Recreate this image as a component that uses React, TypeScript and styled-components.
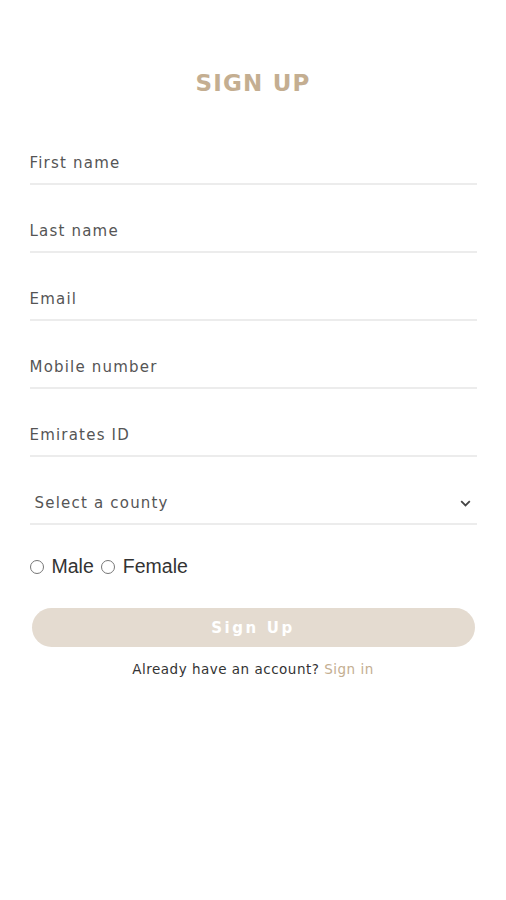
import React, { useState } from 'react';
import styled, { createGlobalStyle } from 'styled-components';

const GlobalStyle = createGlobalStyle`
  body {
    margin: 0;
    background: #ffffff;
    font-family: 'DejaVu Sans', 'Open Sans', sans-serif;
  }
`;

const Page = styled.div`
  width: 447px;
  margin: 0 auto;
  padding-top: 68px;
  display: flex;
  flex-direction: column;
`;

const Title = styled.h1`
  margin: 0 0 44px;
  text-align: center;
  font-size: 23px;
  line-height: 31px;
  font-weight: 700;
  letter-spacing: 1.2px;
  color: #c4ae91;
`;

const Form = styled.form`
  display: flex;
  flex-direction: column;
  gap: 26px;
`;

const Input = styled.input`
  height: 40px;
  padding: 0;
  border: none;
  border-bottom: 2px solid #ececec;
  outline: none;
  background: transparent;
  font-family: 'DejaVu Sans', sans-serif;
  font-size: 15px;
  letter-spacing: 1.2px;
  color: #333;

  &::placeholder {
    color: #555;
  }
`;

const SelectWrap = styled.div`
  position: relative;
  height: 40px;
  border-bottom: 2px solid #ececec;
`;

const Select = styled.select`
  appearance: none;
  width: 100%;
  height: 40px;
  padding: 0 0 0 5px;
  border: none;
  outline: none;
  background: transparent;
  font-family: 'DejaVu Sans', sans-serif;
  font-size: 15px;
  letter-spacing: 1.2px;
  color: #555;
`;

const Chevron = styled.svg`
  position: absolute;
  right: 6px;
  top: 17px;
  pointer-events: none;
`;

const RadioRow = styled.div`
  display: flex;
  align-items: center;
  margin-top: 4px;
  font-family: 'Liberation Sans', Arial, sans-serif;
  font-size: 19.5px;
  color: #333;
`;

const RadioLabel = styled.label`
  display: flex;
  align-items: center;
  margin-right: 7px;
`;

const Radio = styled.input`
  width: 14px;
  height: 14px;
  margin: 0 8px 0 0;
  accent-color: #777;
`;

const SubmitButton = styled.button`
  margin: 30px 2px 0;
  height: 39px;
  border: none;
  border-radius: 20px;
  background: #e4dbd0;
  color: #ffffff;
  font-family: 'DejaVu Sans', sans-serif;
  font-size: 15px;
  font-weight: 700;
  letter-spacing: 2.6px;
`;

const Footer = styled.p`
  margin: 14px 0 0;
  text-align: center;
  font-family: 'DejaVu Sans', sans-serif;
  font-size: 13.5px;
  letter-spacing: 0.5px;
  color: #333;
`;

const SignInLink = styled.a`
  color: #c4ae91;
  text-decoration: none;
`;

const fields = ['First name', 'Last name', 'Email', 'Mobile number', 'Emirates ID'];

const App = () => {
  const [gender, setGender] = useState('');

  return (
    <>
      <GlobalStyle />
      <Page>
        <Title>SIGN UP</Title>
        <Form onSubmit={(e) => e.preventDefault()}>
          {fields.map((f) => (
            <Input key={f} placeholder={f} />
          ))}
          <SelectWrap>
            <Select defaultValue="">
              <option value="" disabled>
                Select a county
              </option>
            </Select>
            <Chevron width="11" height="7" viewBox="0 0 11 7">
              <path d="M1.2 1.2 5.5 5.4l4.3-4.2" fill="none" stroke="#444" strokeWidth="1.8" />
            </Chevron>
          </SelectWrap>
          <RadioRow>
            <RadioLabel>
              <Radio
                type="radio"
                name="gender"
                checked={gender === 'male'}
                onChange={() => setGender('male')}
              />
              Male
            </RadioLabel>
            <RadioLabel>
              <Radio
                type="radio"
                name="gender"
                checked={gender === 'female'}
                onChange={() => setGender('female')}
              />
              Female
            </RadioLabel>
          </RadioRow>
        </Form>
        <SubmitButton type="button">Sign Up</SubmitButton>
        <Footer>
          Already have an account? <SignInLink href="#">Sign in</SignInLink>
        </Footer>
      </Page>
    </>
  );
};

export default App;
